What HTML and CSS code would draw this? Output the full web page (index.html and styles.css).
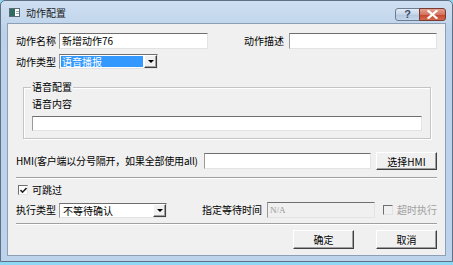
FILE: index.html
```html
<!DOCTYPE html>
<html lang="zh-CN">
<head>
<meta charset="utf-8">
<title>动作配置</title>
<link rel="stylesheet" href="styles.css">
</head>
<body>
<div class="window">
  <div class="titlebar">
    <svg class="appicon" width="11" height="9" viewBox="0 0 11 9">
      <rect x="0.5" y="0.5" width="10" height="8" fill="#ffffff" stroke="#5d6b78"/>
      <rect x="1" y="1" width="5" height="7" fill="#2f6b5e"/>
      <rect x="7" y="3" width="3" height="1" fill="#9aa7b3"/>
      <rect x="7" y="5" width="3" height="1" fill="#9aa7b3"/>
    </svg>
    <span class="title">动作配置</span>
    <div class="caption">
      <div class="cbtn help">?</div>
      <div class="cbtn close">
        <svg width="11" height="9" viewBox="0 0 11 9"><path d="M1.5 1 L9.5 8 M9.5 1 L1.5 8" stroke="#ffffff" stroke-width="2.2" stroke-linecap="square"/></svg>
      </div>
    </div>
  </div>
  <div class="client">
    <div class="row r1">
      <span class="lbl w43">动作名称</span>
      <div class="edit w149">新增动作76</div>
      <span class="lbl push">动作描述</span>
      <div class="edit w148"></div>
    </div>
    <div class="row r2">
      <span class="lbl w43">动作类型</span>
      <div class="combo w99">
        <div class="combo-text"><span class="sel">语音播报</span></div>
        <div class="dropbtn"><span class="tri"></span></div>
      </div>
    </div>
    <div class="group">
      <div class="group-title">语音配置</div>
      <div class="group-label">语音内容</div>
      <div class="edit full"></div>
    </div>
    <div class="row r3">
      <span class="lbl hmi">HMI(客户端以分号隔开，如果全部使用all)</span>
      <div class="edit w167"></div>
      <div class="btn w61 push">选择HMI</div>
    </div>
    <div class="sep"></div>
    <div class="row r4">
      <span class="check checked"><svg width="7" height="7" viewBox="0 0 7 7"><path d="M0.5 3 L2.5 5.2 L6.5 1" fill="none" stroke="#222" stroke-width="1.6"/></svg></span>
      <span class="lbl">可跳过</span>
    </div>
    <div class="row r5">
      <span class="lbl w43">执行类型</span>
      <div class="combo w108">
        <div class="combo-text plain">不等待确认</div>
        <div class="dropbtn"><span class="tri"></span></div>
      </div>
      <span class="lbl wait">指定等待时间</span>
      <div class="edit w108 disabled">N/A</div>
      <span class="check dis"></span>
      <span class="lbl gray">超时执行</span>
    </div>
    <div class="sep sep2"></div>
    <div class="row r6">
      <div class="btn w61">确定</div>
      <div class="btn w61 gap22">取消</div>
    </div>
  </div>
</div>
</body>
</html>
```
FILE: styles.css
```css
html, body {
  margin: 0;
  padding: 0;
  background: #8fd8f5;
}
body {
  font-family: "Noto Sans CJK SC", "Noto Sans", sans-serif;
  font-size: 10px;
  color: #000;
}
.window {
  width: 453px;
  height: 262px;
  box-sizing: border-box;
  border: 1px solid #5f7085;
  border-radius: 5px 5px 0 0;
  background: linear-gradient(#cfdff1, #bcd2ea 30px, #bdd3eb);
  display: flex;
  flex-direction: column;
  padding: 0 6px 5px 6px;
}
.titlebar {
  height: 22px;
  display: flex;
  align-items: center;
}
.appicon {
  margin-left: 2px;
  margin-top: 1px;
}
.title {
  margin-left: 6px;
  font-size: 10px;
  color: #1a1a1a;
  margin-top: 1px;
}
.caption {
  margin-left: auto;
  display: flex;
  align-self: flex-start;
  margin-top: 7px;
}
.cbtn {
  height: 13px;
  box-sizing: border-box;
  border: 1px solid #6c7d92;
  display: flex;
  align-items: center;
  justify-content: center;
}
.help {
  width: 25px;
  border-radius: 3px 0 0 3px;
  background: linear-gradient(#e3ecf6, #c3d4e8 50%, #b3c7df 51%, #c4d6ea);
  color: #3b4f68;
  font-family: "Liberation Sans", sans-serif;
  font-size: 11px;
  font-weight: bold;
  line-height: 11px;
}
.close {
  width: 27px;
  margin-left: -1px;
  border-color: #7a3a34;
  border-radius: 0 3px 3px 0;
  background: linear-gradient(#e6a391, #d4735d 50%, #c3452d 51%, #d36a4c);
}
.client {
  flex: 1;
  background: #f0f0f0;
  border: 1px solid #8d9fb5;
  padding: 9px 8px 0 8px;
  display: flex;
  flex-direction: column;
}
.row {
  display: flex;
  align-items: center;
}
.lbl {
  white-space: nowrap;
  line-height: 14px;
}
.push { margin-left: auto; }
.w43 { width: 43px; flex: none; }
.w149 { width: 149px; }
.w148 { width: 148px; margin-left: 5px; }
.w99 { width: 99px; }
.w108 { width: 108px; }
.w167 { width: 167px; margin-left: 5px; }
.w61 { width: 61px; }
.edit {
  height: 16px;
  box-sizing: border-box;
  background: #fff;
  border-top: 1px solid #6f6f6f;
  border-left: 1px solid #9a9a9a;
  border-right: 1px solid #e3e3e3;
  border-bottom: 1px solid #e3e3e3;
  padding-left: 2px;
  line-height: 14px;
  white-space: nowrap;
}
.edit.disabled {
  background: #f0f0f0;
  color: #9a9a9a;
  font-family: "Liberation Serif", serif;
  font-size: 9px;
  margin-left: 5px;
}
.r1 { height: 16px; }
.r2 { height: 15px; margin-top: 5px; }
.combo {
  height: 15px;
  box-sizing: border-box;
  display: flex;
  background: #fff;
  border-top: 1px solid #6f6f6f;
  border-left: 1px solid #9a9a9a;
  border-right: 1px solid #e3e3e3;
  border-bottom: 1px solid #e3e3e3;
}
.combo-text {
  flex: 1;
  padding: 1px;
  display: flex;
}
.combo-text.plain {
  padding-left: 3px;
  line-height: 13px;
  padding-top: 0;
}
.sel {
  flex: 1;
  background: #3399ff;
  color: #fff;
  line-height: 11px;
  padding-left: 1px;
}
.dropbtn {
  width: 13px;
  box-sizing: border-box;
  background: #f0f0f0;
  border-top: 1px solid #fff;
  border-left: 1px solid #fff;
  border-right: 1px solid #404040;
  border-bottom: 1px solid #404040;
  box-shadow: inset -1px -1px 0 #a0a0a0;
  display: flex;
  align-items: center;
  justify-content: center;
}
.tri {
  width: 0;
  height: 0;
  border-left: 3px solid transparent;
  border-right: 3px solid transparent;
  border-top: 3px solid #000;
}
.group {
  margin-top: 18px;
  margin-left: 7px;
  width: 408px;
  height: 52px;
  box-sizing: border-box;
  border: 1px solid #c4c4c4;
  box-shadow: inset 1px 1px 0 #fff, 1px 1px 0 #fff;
  padding: 0 0 0 8px;
  display: flex;
  flex-direction: column;
}
.group-title {
  align-self: flex-start;
  margin-top: -8px;
  background: #f0f0f0;
  padding: 0 1px;
  margin-left: -1px;
  line-height: 14px;
}
.group-label {
  margin-top: 3px;
  line-height: 14px;
}
.edit.full {
  width: 390px;
  margin-top: 5px;
  height: 15px;
}
.r3 { height: 18px; margin-top: 13px; }
.hmi {
  width: 183px;
  flex: none;
  letter-spacing: -0.2px;
  overflow: visible;
}
.btn {
  height: 19px;
  box-sizing: border-box;
  background: #f0f0f0;
  border-top: 1px solid #fff;
  border-left: 1px solid #fff;
  border-right: 1px solid #404040;
  border-bottom: 1px solid #404040;
  box-shadow: inset -1px -1px 0 #a0a0a0;
  display: flex;
  align-items: center;
  justify-content: center;
  white-space: nowrap;
}
.r3 .btn { height: 18px; }
.sep {
  height: 1px;
  background: #a0a0a0;
  border-bottom: 1px solid #fff;
  margin-top: 7px;
}
.sep2 { margin-top: 5px; }
.r4 { height: 12px; margin-top: 5px; padding-left: 2px; }
.check {
  width: 10px;
  height: 10px;
  box-sizing: border-box;
  background: #fff;
  border-top: 1px solid #6f6f6f;
  border-left: 1px solid #6f6f6f;
  border-right: 1px solid #e3e3e3;
  border-bottom: 1px solid #e3e3e3;
  display: flex;
  align-items: center;
  justify-content: center;
  margin-right: 4px;
  flex: none;
}
.check.dis {
  margin-left: 8px;
  background: #f0f0f0;
}
.r5 { height: 16px; margin-top: 6px; }
.wait { margin-left: auto; }
.gray { color: #a0a0a0; }
.r6 {
  margin-top: 5px;
  justify-content: flex-end;
}
.gap22 { margin-left: 22px; }
```
